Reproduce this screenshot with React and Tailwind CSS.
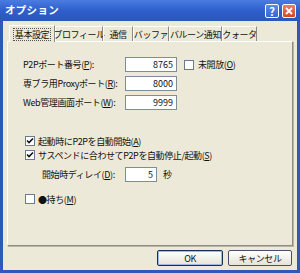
import React from "react";

function Check({ checked }) {
  return (
    <span className="w-[10px] h-[10px] bg-white border border-[#6b7a8c] flex items-center justify-center shrink-0">
      {checked && (
        <svg width="8" height="8" viewBox="0 0 8 8">
          <path d="M1 3.5 L3 5.5 L7 1.5" stroke="#111" strokeWidth="1.6" fill="none" />
        </svg>
      )}
    </span>
  );
}

function Field({ value, w = "w-[52px]" }) {
  return (
    <div className={`${w} h-[15px] bg-white border border-[#7f8c99] flex items-center justify-end pr-[3px] text-[9px] leading-none tracking-normal shrink-0`}>
      {value}
    </div>
  );
}

const tabs = [
  { t: "基本設定", w: "w-[46px]", sel: true },
  { t: "プロフィール", w: "w-[48px]" },
  { t: "通信", w: "w-[30px]" },
  { t: "バッファ", w: "w-[36px]" },
  { t: "バルーン通知", w: "w-[53px]" },
  { t: "クォータ", w: "w-[35px]" },
];

export default function App() {
  return (
    <div className="w-[300px] h-[273px] flex flex-col bg-[#3058b8] font-['Noto_Sans_CJK_JP',sans-serif] text-[9px] tracking-[-0.4px] text-[#111] leading-none whitespace-nowrap">
      <div className="h-[21px] flex items-center justify-between pl-[5px] pr-[4px] bg-gradient-to-b from-[#4a7ce0] via-[#2f5fcc] to-[#2a56bd]">
        <span className="text-white font-bold text-[10.5px] tracking-[0.3px]">オプション</span>
        <div className="flex gap-[3px] mt-[1px]">
          <div className="w-[14px] h-[14px] rounded-[2px] border border-white bg-gradient-to-b from-[#5b8ae8] to-[#3565cf] flex items-center justify-center text-white font-bold text-[11px] tracking-normal">?</div>
          <div className="w-[14px] h-[14px] rounded-[2px] border border-white bg-gradient-to-b from-[#e9805a] to-[#cf4a22] flex items-center justify-center">
            <svg width="8" height="8" viewBox="0 0 8 8">
              <path d="M1 1 L7 7 M7 1 L1 7" stroke="white" strokeWidth="1.8" />
            </svg>
          </div>
        </div>
      </div>
      <div className="flex-1 px-[3px] pb-[3px] flex">
        <div className="flex-1 bg-[#ece9d8] flex flex-col px-[4px] pt-[3px]">
          <div className="h-[17px] flex items-end pl-[2px]">
            {tabs.map((tab, i) => (
              <div
                key={i}
                className={`${tab.w} ${tab.sel ? "h-[17px] relative top-[1px] z-10 bg-[#ece9d8]" : "h-[15px]"} shrink-0 border-t border-l border-r border-t-white border-l-white border-r-[#8a8a86] flex items-center justify-center`}
              >
                {tab.sel ? (
                  <span className="border border-dotted border-[#555] px-[1px] py-[1px]">{tab.t}</span>
                ) : (
                  tab.t
                )}
              </div>
            ))}
          </div>
          <div className="h-[205px] border border-t-white border-l-white border-r-[#8d8d88] border-b-[#8d8d88] shadow-[1px_1px_0_#b9b6a6] flex flex-col pl-[15px] pt-[15px]">
            <div className="flex items-center h-[15px]">
              <span className="w-[102px] shrink-0">P2Pポート番号(<u>P</u>):</span>
              <Field value="8765" />
              <span className="ml-[7px]"><Check /></span>
              <span className="ml-[4px]">未開放(<u>O</u>)</span>
            </div>
            <div className="flex items-center h-[15px] mt-[4px]">
              <span className="w-[102px] shrink-0">専ブラ用Proxyポート(<u>R</u>):</span>
              <Field value="8000" />
            </div>
            <div className="flex items-center h-[15px] mt-[4px]">
              <span className="w-[102px] shrink-0">Web管理画面ポート(<u>W</u>):</span>
              <Field value="9999" />
            </div>
            <div className="flex items-center h-[10px] mt-[26px] pl-[2px]">
              <Check checked />
              <span className="ml-[3px]">起動時にP2Pを自動開始(<u>A</u>)</span>
            </div>
            <div className="flex items-center h-[10px] mt-[4px] pl-[2px]">
              <Check checked />
              <span className="ml-[3px]">サスペンドに合わせてP2Pを自動停止/起動(<u>S</u>)</span>
            </div>
            <div className="flex items-center h-[15px] mt-[7px]">
              <span className="w-[102px] shrink-0 pl-[19px]">開始時ディレイ(<u>D</u>):</span>
              <Field value="5" w="w-[32px]" />
              <span className="ml-[6px]">秒</span>
            </div>
            <div className="flex items-center h-[10px] mt-[12px] pl-[2px]">
              <Check />
              <span className="ml-[3px]">●持ち(<u>M</u>)</span>
            </div>
          </div>
          <div className="flex justify-end gap-[5px] mt-[4px] pr-[1px]">
            <div className="w-[66px] h-[16px] rounded-[2px] border border-[#1b2f55] bg-gradient-to-b from-white to-[#e6e3d6] shadow-[inset_0_0_0_1px_#9db7e8] flex items-center justify-center">OK</div>
            <div className="w-[64px] h-[16px] rounded-[2px] border border-[#44506a] bg-gradient-to-b from-white to-[#e6e3d6] flex items-center justify-center">キャンセル</div>
          </div>
        </div>
      </div>
    </div>
  );
}
